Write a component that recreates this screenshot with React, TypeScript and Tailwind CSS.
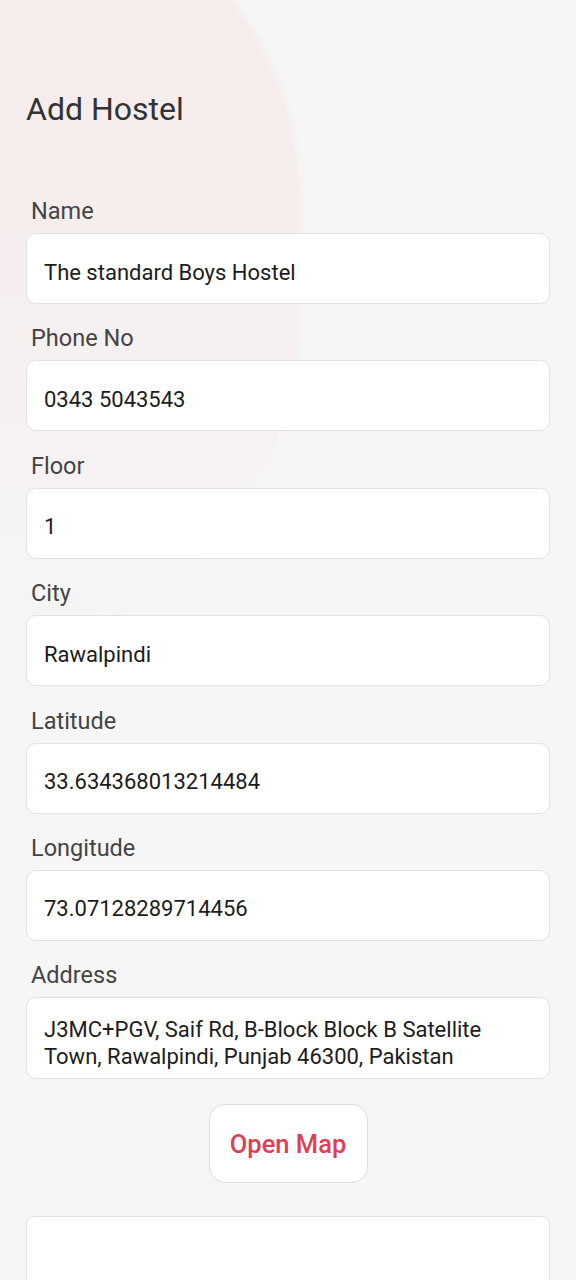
import React, { useState } from "react";

const fields = [
  { label: "Name", value: "The standard Boys Hostel" },
  { label: "Phone No", value: "0343 5043543" },
  { label: "Floor", value: "1" },
  { label: "City", value: "Rawalpindi" },
  { label: "Latitude", value: "33.634368013214484" },
  { label: "Longitude", value: "73.07128289714456" },
];

export default function App() {
  const [form, setForm] = useState(fields);
  const [address, setAddress] = useState(
    "J3MC+PGV, Saif Rd, B-Block Block B Satellite Town, Rawalpindi, Punjab 46300, Pakistan"
  );

  return (
    <div
      className="relative w-[576px] h-[1280px] overflow-hidden bg-[#f6f6f7]"
      style={{ fontFamily: "Roboto, 'Noto Sans', sans-serif" }}
    >
      {/* pink blob behind the header */}
      <div className="absolute left-[-330px] top-[-120px] w-[630px] h-[760px] rounded-full bg-gradient-to-b from-[#f6ebeb] via-[#f6eeee] to-[#f6f6f7] blur-[2px]" />

      <div className="relative px-[26px] pt-[90px]">
        <h1 className="text-[32px] leading-[38px] text-[#333333] mb-[70px]">Add Hostel</h1>

        <div className="flex flex-col">
          {form.map((f, i) => (
            <div key={f.label} className="flex flex-col">
              <label className="pl-[5px] text-[23.5px] leading-[26px] text-[#444444] mb-[9px]">
                {f.label}
              </label>
              <input
                className="h-[71px] w-full rounded-[10px] border border-[#e1e1ea] bg-white px-[17px] pt-[7px] text-[22px] text-[#1c1c1c] outline-none mb-[21.4px]"
                value={f.value}
                onChange={(e) =>
                  setForm(form.map((x, j) => (j === i ? { ...x, value: e.target.value } : x)))
                }
              />
            </div>
          ))}

          <label className="pl-[5px] text-[23.5px] leading-[26px] text-[#444444] mb-[9px]">Address</label>
          <textarea
            className="h-[82px] w-full resize-none rounded-[10px] border border-[#e1e1ea] bg-white px-[17px] pt-[18px] text-[22px] leading-[27px] text-[#1c1c1c] outline-none"
            value={address}
            onChange={(e) => setAddress(e.target.value)}
          />
        </div>

        <div className="flex justify-center mt-[25px]">
          <button className="h-[79px] w-[159px] rounded-[16px] border border-[#dcdce6] bg-white text-[25.5px] font-medium text-[#dd3f56]">
            Open Map
          </button>
        </div>

        <div className="mt-[33px] h-[120px] w-full rounded-[8px] border border-[#e1e1ea] bg-white" />
      </div>
    </div>
  );
}
